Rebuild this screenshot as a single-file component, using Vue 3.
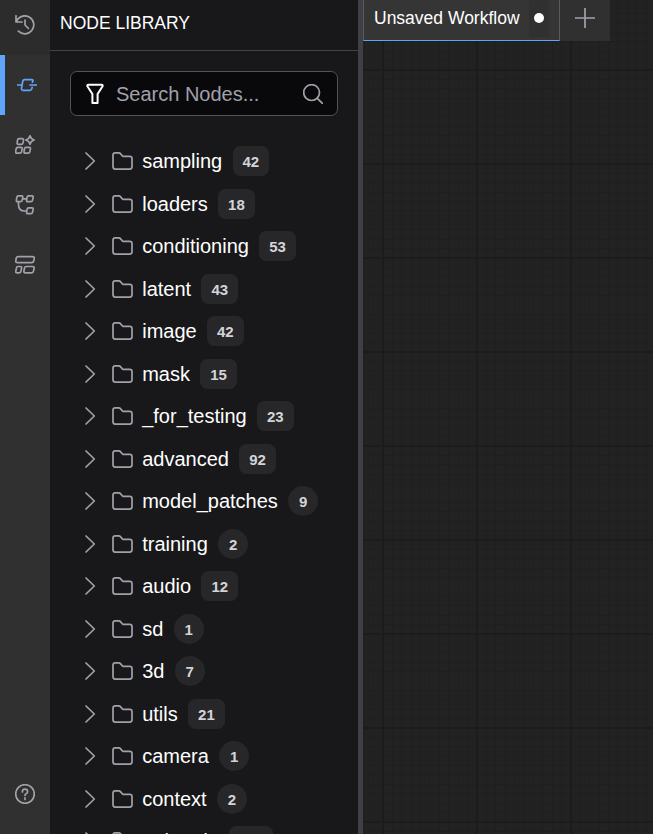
<script setup>
import { ref } from 'vue'

const folders = ref([
  { name: 'sampling', count: 42 },
  { name: 'loaders', count: 18 },
  { name: 'conditioning', count: 53 },
  { name: 'latent', count: 43 },
  { name: 'image', count: 42 },
  { name: 'mask', count: 15 },
  { name: '_for_testing', count: 23 },
  { name: 'advanced', count: 92 },
  { name: 'model_patches', count: 9 },
  { name: 'training', count: 2 },
  { name: 'audio', count: 12 },
  { name: 'sd', count: 1 },
  { name: '3d', count: 7 },
  { name: 'utils', count: 21 },
  { name: 'camera', count: 1 },
  { name: 'context', count: 2 },
  { name: 'api node', count: 117 }
])
</script>

<template>
  <div class="app">
    <nav class="rail">
      <button class="rail-item history">
        <svg viewBox="0 0 20 20"><path d="M1 .8v6.200h6M1.400 6.500A9 9 0 1 1 3.400 16.200M10 5v5l3.500 3.500" /></svg>
      </button>
      <button class="rail-item active">
        <svg viewBox="0 0 20 20"><path d="M.5 10h4.500M13 10h6.500M15.400 7.200L16 5.600Q16 4.700 15 4.700H7.600Q6.200 4.700 5.800 6L4.500 13.400Q4.400 15.300 6 15.300H12.800Q14.400 15.300 14.800 13.800L15.100 12.400" /></svg>
      </button>
      <button class="rail-item">
        <svg viewBox="0 0 20 20">
          <path d="M3.900 3.700h3.200q1.700 0 1.400 1.600l-.5 2.500q-.3 1.500-1.800 1.500H3.500q-1.700 0-1.400-1.600l.4-2.500Q2.800 3.700 3.900 3.700z" />
          <path d="M2.700 12.300h3.100q1.600 0 1.300 1.500l-.5 2.900q-.3 1.500-1.800 1.500H2q-1.600 0-1.300-1.500l.4-2.900Q1.400 12.300 2.700 12.300z" />
          <path d="M11 12.300h3.100q1.600 0 1.300 1.500l-.5 2.900q-.3 1.500-1.800 1.500h-2.800q-1.600 0-1.300-1.500l.4-2.900Q9.700 12.300 11 12.300z" />
          <path d="M15 .8q.8 3.300 4.200 4.200-3.400.9-4.200 4.200-.8-3.300-4.200-4.200 3.400-.9 4.200-4.200z" />
        </svg>
      </button>
      <button class="rail-item">
        <svg viewBox="0 0 20 20">
          <path d="M3.400.8h3q1.600 0 1.300 1.500l-.5 2.900q-.3 1.500-1.800 1.500H2.700q-1.600 0-1.300-1.500l.4-2.900Q2.100.8 3.400.8zM13.600.8h3.200q1.600 0 1.300 1.500l-.5 2.900q-.3 1.500-1.800 1.500h-2.900q-1.600 0-1.300-1.500l.4-2.900Q12.300.8 13.600.8zM13.600 12.800h3.200q1.600 0 1.300 1.500l-.5 2.900q-.3 1.500-1.800 1.500h-2.900q-1.600 0-1.300-1.500l.4-2.900q.3-1.500 1.600-1.500zM7.500 3.800h4M3.500 7v2.500q0 6.500 6 6.500h2" />
        </svg>
      </button>
      <button class="rail-item">
        <svg viewBox="0 0 20 20">
          <path d="M3.500 1.600h14q2 0 1.700 1.800l-.5 2.600q-.3 1.600-2 1.600H2.500Q.5 7.600.8 5.800l.4-2.600Q1.500 1.600 3.500 1.600zM2.900 11.500h2.500q1.500 0 1.200 1.500l-.6 3.200q-.3 1.600-1.800 1.600H2q-1.500 0-1.200-1.500l.6-3.200q.3-1.600 1.500-1.600zM11.300 11.500h6.200q1.900 0 1.600 1.600l-.6 3.100q-.3 1.600-2 1.600h-6q-1.900 0-1.600-1.600l.6-3.100q.3-1.600 1.800-1.600z" />
        </svg>
      </button>
      <button class="rail-item help">
        <svg viewBox="0 0 20 20"><circle cx="10" cy="10" r="9.300" /><path d="M7.400 8V7.500Q7.500 5.200 10 5.200t2.600 2.500q0 1.500-1.600 2.100Q10 10.200 10 11.500M10 13.900v1.500" /></svg>
      </button>
    </nav>

    <aside class="library">
      <header>NODE LIBRARY</header>
      <div class="search">
        <svg class="filter" viewBox="0 0 20 22"><path d="M3.500 1.800h13q1.500 0 1.100 1.500L12.600 11v9H7.400v-9L2.400 3.300Q2 1.800 3.500 1.800z" /></svg>
        <span>Search Nodes...</span>
        <svg class="magnifier" viewBox="0 0 20 20"><circle cx="8.600" cy="8.600" r="7.900" /><path d="M14.300 14.300l5.200 5.200" /></svg>
      </div>
      <ul class="tree">
        <li v-for="folder in folders" :key="folder.name">
          <svg class="chevron" viewBox="0 0 12 18"><path d="M2 1l8.300 8L2 17" /></svg>
          <svg class="folder" viewBox="0 0 21 18"><path d="M3.300.9h3.600q.9 0 1.500.7L10.700 4.300h7q2.300 0 2.300 2.300v8.200q0 2.300-2.300 2.300H3.300Q1 17.100 1 14.800V3.200Q1 .9 3.300.9z" /></svg>
          <span class="label">{{ folder.name }}</span>
          <span class="badge" :class="{ round: folder.count < 10 }">{{ folder.count }}</span>
        </li>
      </ul>
    </aside>

    <div class="gutter"></div>

    <main class="canvas">
      <div class="tabs">
        <div class="tab">
          <span>Unsaved Workflow</span>
          <span class="status"><i></i></span>
        </div>
        <button class="add">
          <svg viewBox="0 0 20 20"><path d="M10 .5v19M.5 10h19" /></svg>
        </button>
      </div>
    </main>
  </div>
</template>

<style>
body {
  margin: 0;
  overflow: hidden;
  background: #18181a;
}
</style>

<style scoped>
.app {
  display: flex;
  height: 100vh;
  overflow: hidden;
  font-family: "Liberation Sans", Arial, sans-serif;
  color: #fff;
}
svg {
  display: block;
  flex: none;
  fill: none;
  stroke: #a1a1aa;
  stroke-width: 1.7;
  stroke-linecap: round;
  stroke-linejoin: round;
}
button {
  border: 0;
  padding: 0;
  background: none;
}

/* side rail */
.rail {
  width: 50px;
  flex: none;
  display: flex;
  flex-direction: column;
  background: #303030;
}
.rail-item {
  height: 60px;
  flex: none;
  display: flex;
  align-items: center;
  justify-content: center;
}
.rail-item svg {
  width: 20px;
  height: 20px;
}
.rail-item.history {
  height: 55px;
  padding-bottom: 5px;
  box-sizing: border-box;
  background: #2c2c2d;
}
.rail-item.active {
  border-left: 5px solid #60a5fa;
  padding-right: 1px;
}
.rail-item.active svg {
  stroke: #60a5fa;
}
.rail-item.help {
  margin-top: auto;
  margin-bottom: 10px;
}

/* node library */
.library {
  width: 308px;
  flex: none;
  display: flex;
  flex-direction: column;
  background: #18181a;
}
.library header {
  height: 51px;
  flex: none;
  margin-bottom: 20px;
  padding: 0 10px 4px;
  box-sizing: border-box;
  border-bottom: 1px solid #434346;
  display: flex;
  align-items: center;
  font-size: 17.5px;
}
.search {
  height: 45px;
  flex: none;
  box-sizing: border-box;
  margin: 0 20px;
  padding: 0 14px;
  display: flex;
  align-items: center;
  border: 1px solid #52525b;
  border-radius: 7px;
  background: #09090b;
  font-size: 20px;
  color: #a1a1aa;
}
.search span {
  flex: 1;
  margin-left: 11px;
  padding-top: 2px;
}
.search .filter {
  width: 20px;
  height: 22px;
  stroke: #fff;
  stroke-width: 2;
}
.search .magnifier {
  width: 20px;
  height: 20px;
}
.tree {
  list-style: none;
  margin: 24.1px 0 0;
  padding: 0 0 0 34px;
}
.tree li {
  height: 42.5px;
  display: flex;
  align-items: center;
  font-size: 20px;
}
.chevron {
  width: 12px;
  height: 18px;
}
.folder {
  width: 21px;
  height: 18px;
  margin-left: 16px;
}
.label {
  margin-left: 9.2px;
  padding-top: 0.5px;
  white-space: nowrap;
}
.badge {
  height: 30px;
  min-width: 30px;
  box-sizing: border-box;
  margin-left: 10.3px;
  padding: 0 10px;
  border-radius: 7.5px;
  background: #27272a;
  color: #d4d4d8;
  font-size: 15px;
  font-weight: bold;
  line-height: 31px;
  text-align: center;
}
.badge.round {
  padding: 0;
  border-radius: 50%;
}

.gutter {
  width: 5px;
  flex: none;
  background: #3f3f46;
}

/* graph canvas with minor and major grid lines */
.canvas {
  flex: 1;
  background-color: #222;
  background-image:
    linear-gradient(90deg, #1c1c1c 2px, transparent 2px),
    linear-gradient(#1c1c1c 2px, transparent 2px),
    repeating-linear-gradient(90deg, transparent 0 0.6px, #1f1f1f 0.6px 1.6px, transparent 1.6px 9.4px),
    repeating-linear-gradient(180deg, transparent 0 3.7px, #1f1f1f 3.7px 4.7px, transparent 4.7px 9.4px);
  background-size: 94px 94px, 94px 94px, auto, auto;
  background-position: 19px 0, 0 69px, 0 0, 0 0;
}
.tabs {
  display: flex;
  height: 41px;
}
.tab {
  width: 197px;
  box-sizing: border-box;
  display: flex;
  align-items: center;
  padding: 0 10px 4px;
  border-left: 1px solid #5a5a5a;
  border-right: 1px solid #5a5a5a;
  border-bottom: 1px solid #60a5fa;
  background: #353535;
  font-size: 17.5px;
  white-space: nowrap;
}
.status {
  width: 20px;
  height: 37px;
  margin-left: auto;
  display: flex;
  align-items: center;
  justify-content: center;
  background: #303030;
}
.status i {
  width: 10px;
  height: 10px;
  border-radius: 50%;
  background: #fff;
}
.add {
  width: 50px;
  padding-bottom: 5px;
  display: flex;
  align-items: center;
  justify-content: center;
  background: #303030;
}
.add svg {
  width: 20px;
  height: 20px;
}
</style>
